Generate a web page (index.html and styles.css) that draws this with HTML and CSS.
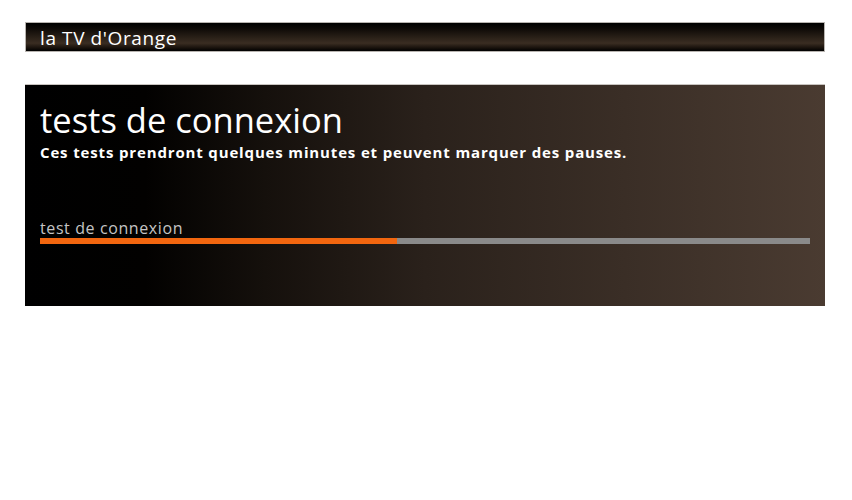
FILE: index.html
```html
<!DOCTYPE html>
<html lang="fr">
<head>
<meta charset="utf-8">
<title>la TV d'Orange</title>
<link rel="stylesheet" href="styles.css">
</head>
<body>
<div class="page">
  <header class="topbar"><span class="brand">la TV d'Orange</span></header>
  <section class="panel">
    <h1 class="title">tests de connexion</h1>
    <p class="subtitle">Ces tests prendront quelques minutes et peuvent marquer des pauses.</p>
    <div class="step">
      <div class="step-label">test de connexion</div>
      <div class="progress"><div class="progress-fill" style="width:46.4%"></div></div>
    </div>
  </section>
</div>
</body>
</html>
```

FILE: styles.css
```css
html, body {
  margin: 0;
  padding: 0;
  background: #ffffff;
}
body {
  font-family: "Open Sans", "DejaVu Sans", sans-serif;
  color: #ffffff;
}
.page {
  width: 800px;
  padding: 22px 0 0 25px;
  display: flex;
  flex-direction: column;
  gap: 32px;
}
.topbar {
  height: 28px;
  border: 1px solid #b8b4b0;
  background: linear-gradient(to bottom, #000000 0%, #0e0a07 20%, #2c2219 55%, #3a2d22 72%, #1a130d 88%, #000000 100%);
  display: flex;
  align-items: center;
  padding-left: 14px;
}
.brand {
  font-size: 19px;
  line-height: 1;
  letter-spacing: 0.6px;
  margin-top: 3px;
}
.panel {
  height: 222px;
  box-sizing: border-box;
  border-top: 1px solid #c8c4c0;
  background: linear-gradient(to right, #000000 0%, #020100 15%, #15100c 30%, #2a211b 50%, #3a2e26 75%, #4a3b31 100%);
  padding: 15px 15px 0 15px;
  display: flex;
  flex-direction: column;
}
.title {
  margin: 0;
  font-weight: normal;
  font-size: 34.5px;
  line-height: 40px;
}
.subtitle {
  margin: 2px 0 0 0;
  font-weight: bold;
  font-size: 15px;
  line-height: 20px;
  letter-spacing: 0.85px;
}
.step {
  margin-top: 56px;
}
.step-label {
  color: #c4c4c4;
  font-size: 16px;
  line-height: 20px;
  letter-spacing: 0.6px;
}
.progress {
  margin-top: 0;
  height: 6px;
  background: #8a8a8a;
  width: 770px;
}
.progress-fill {
  height: 100%;
  background: #f2660f;
}
```
